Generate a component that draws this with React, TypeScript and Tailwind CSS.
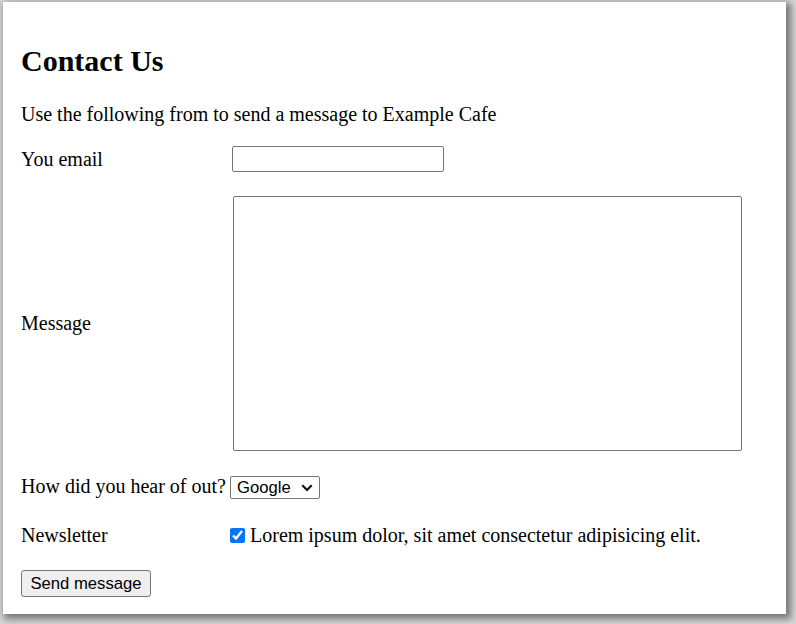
import { useState } from 'react';

export default function App() {
    const [email, setEmail] = useState('');
    const [message, setMessage] = useState('');
    const [source, setSource] = useState('google');
    const [newsletter, setNewsletter] = useState(true);

    return (
        <div className="w-[796px] h-[624px] bg-[#d6d6d6] overflow-hidden">
            {/* page panel */}
            <div className="ml-[3px] mt-[2px] w-[783px] h-[612px] bg-white shadow-[3px_3px_7px_2px_rgba(0,0,0,0.45)] pl-[18px] pt-[42px] text-black font-['Liberation_Serif',serif] text-[20px]">
                <h1 className="m-0 text-[30px] font-bold leading-[34px]">Contact Us</h1>
                <p className="mt-[25px] leading-[23px]">Use the following from to send a message to Example Cafe</p>

                <form onSubmit={(e) => e.preventDefault()}>
                    {/* Email */}
                    <div className="mt-[20px] flex items-center">
                        <label htmlFor="email" className="w-[211px] leading-[23px]">You email</label>
                        <input
                            id="email"
                            type="email"
                            value={email}
                            onChange={(e) => setEmail(e.target.value)}
                            className="w-[212px] h-[26px] border border-[#767676] rounded-[2px] px-[2px] font-['Liberation_Sans',sans-serif] text-[16.67px] outline-none"
                        />
                    </div>

                    {/* Message */}
                    <div className="mt-[24px] flex items-center">
                        <label htmlFor="message" className="w-[211px] leading-[23px]">Message</label>
                        <textarea
                            id="message"
                            value={message}
                            onChange={(e) => setMessage(e.target.value)}
                            className="ml-[1px] w-[509px] h-[255px] border border-[#767676] rounded-[2px] p-[2px] font-['Liberation_Mono',monospace] text-[16.67px] resize-none outline-none"
                        />
                    </div>

                    {/* Source */}
                    <div className="mt-[24px] flex items-start">
                        <label htmlFor="source" className="w-[211px] leading-[23px] whitespace-nowrap">How did you hear of out?</label>
                        <div className="relative -ml-[2px] mt-[1px]">
                            <select
                                id="source"
                                value={source}
                                onChange={(e) => setSource(e.target.value)}
                                className="appearance-none block w-[90px] h-[23px] border border-[#767676] rounded-[2px] bg-white pl-[6px] font-['Liberation_Sans',sans-serif] text-[16.67px] leading-[19px]"
                            >
                                <option value="google">Google</option>
                                <option value="friend">Friend</option>
                                <option value="other">Other</option>
                            </select>
                            <svg
                                className="absolute right-[7px] top-[8px] pointer-events-none"
                                width="12"
                                height="8"
                                viewBox="0 0 12 8"
                            >
                                <path d="M1.3 1.3 L6 6 L10.7 1.3" fill="none" stroke="#111" strokeWidth="2.2" />
                            </svg>
                        </div>
                    </div>

                    {/* Newsletter */}
                    <div className="mt-[25px] flex items-start">
                        <span className="w-[211px] leading-[23px]">Newsletter</span>
                        <label className="-ml-[2px] flex items-start leading-[23px]">
                            <input
                                type="checkbox"
                                checked={newsletter}
                                onChange={(e) => setNewsletter(e.target.checked)}
                                className="mt-[4px] w-[15px] h-[15px] accent-[#0075ff]"
                            />
                            <span className="ml-[5px]">Lorem ipsum dolor, sit amet consectetur adipisicing elit.</span>
                        </label>
                    </div>

                    <button
                        type="submit"
                        className="mt-[23px] w-[130px] h-[27px] bg-[#efefef] border border-[#767676] rounded-[3px] font-['Liberation_Sans',sans-serif] text-[16.67px] leading-[19px] text-black"
                    >
                        Send message
                    </button>
                </form>
            </div>
        </div>
    );
}
